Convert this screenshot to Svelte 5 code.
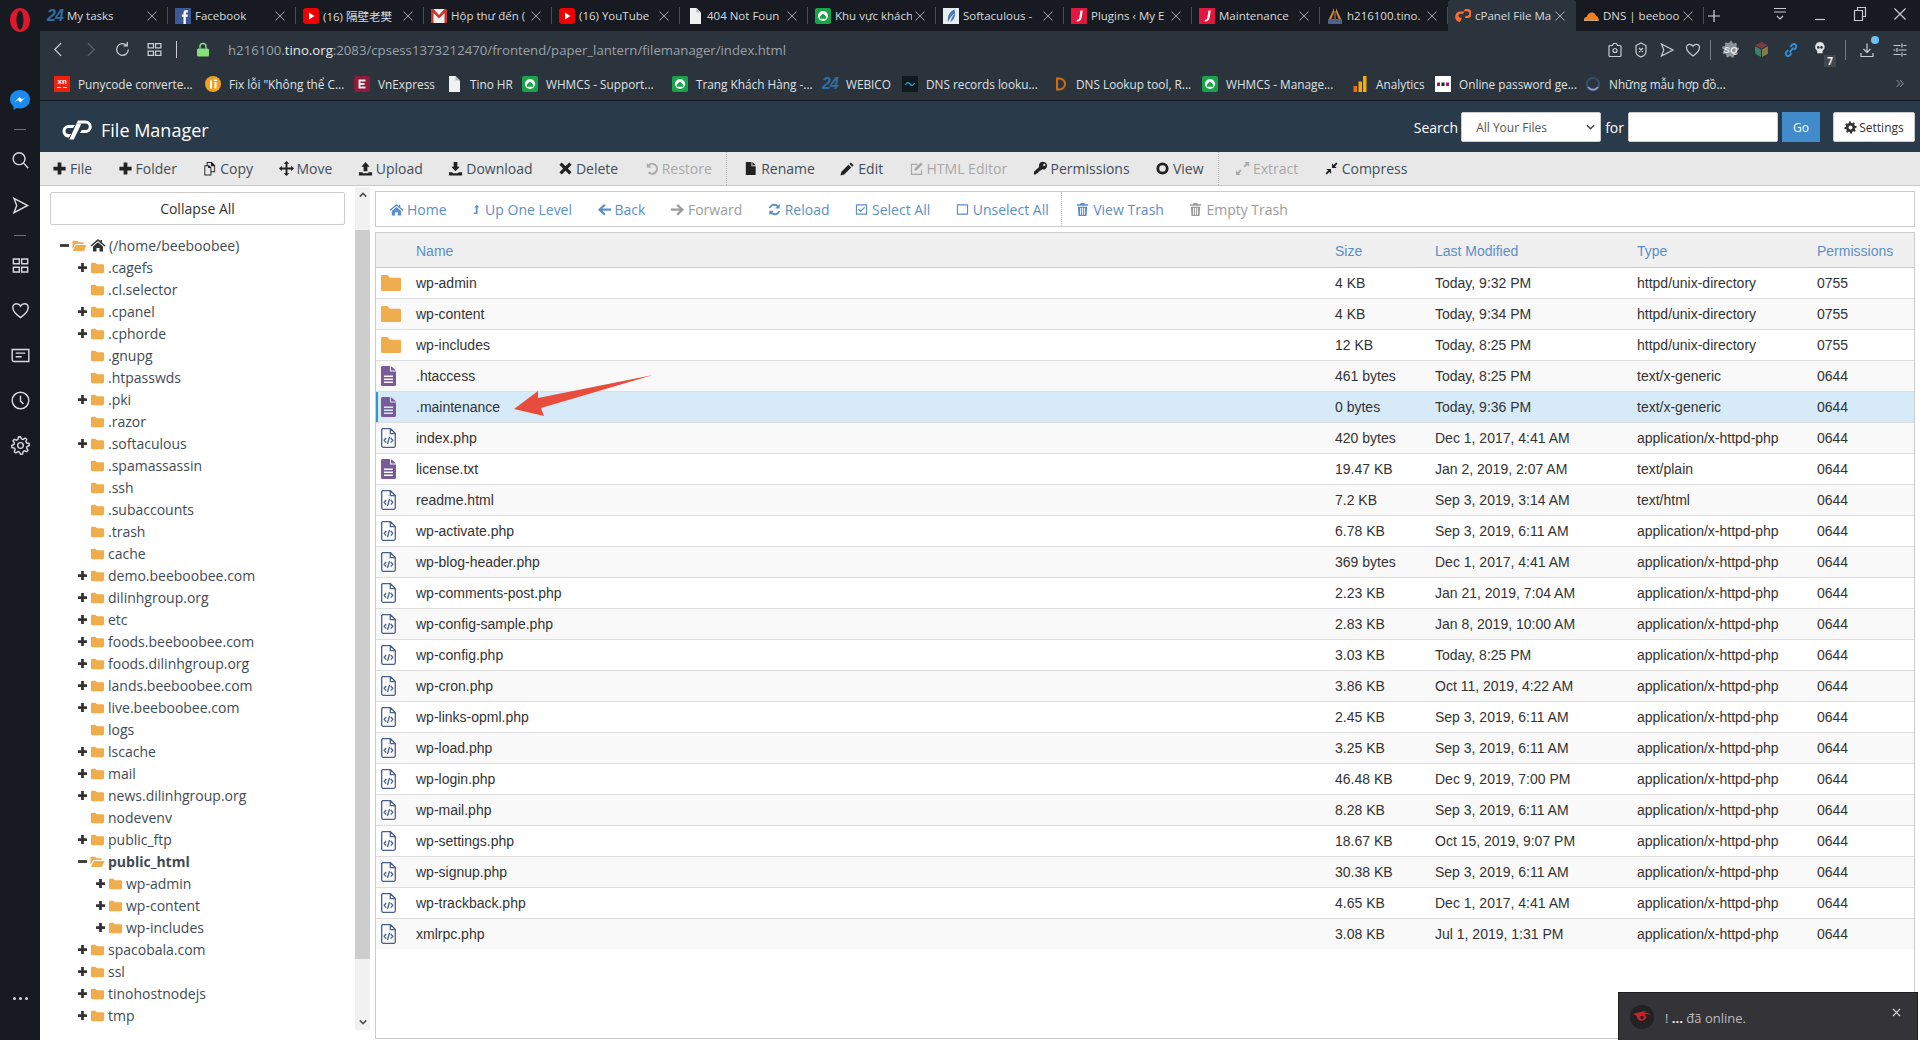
<script>
	function gear(teeth, outer, inner, hole) {
		let d = '';
		const step = (Math.PI * 2) / teeth;
		for (let i = 0; i < teeth; i++) {
			const a = i * step - step / 2;
			const pts = [
				[inner, a + step * 0.0],
				[outer, a + step * 0.2],
				[outer, a + step * 0.5],
				[inner, a + step * 0.7]
			];
			for (const [r, t] of pts) {
				d += (d ? 'L' : 'M') + (8 + r * Math.cos(t)).toFixed(2) + ' ' + (8 + r * Math.sin(t)).toFixed(2);
			}
		}
		d += `zM${8 - hole} 8a${hole} ${hole} 0 1 0 ${hole * 2} 0a${hole} ${hole} 0 1 0 -${hole * 2} 0z`;
		return d;
	}

	const icons = {
		plus: 'M6 1.500h4v4.500h4.500v4H10v4.500H6V10H1.500V6H6z',
		copy: 'M2.500 4.500H5V1h5.500L14 4.500V12H10v3.500H2.500zM6 2v2.500h1.500L10 7v4h3V5.500h-3.500V2zM3.500 5.500v9H9V7.500H6.500v-2z',
		move: 'M8 0l3 3H9v4h4V5l3 3-3 3V9H9v4h2l-3 3-3-3h2V9H3v2L0 8l3-3v2h4V3H5z',
		upload: 'M8 1l4.500 5H10v5H6V6H3.500zM1 12h4v1h6v-1h4v3.500H1z',
		download: 'M6 1h4v5h2.500L8 11 3.500 6H6zM1 12h3.500l1 1h5l1-1H15v3.500H1z',
		times: 'M4 1.500L8 5.500l4-4L14.500 4 10.500 8l4 4-2.500 2.500-4-4-4 4L1.500 12l4-4-4-4z',
		undo: 'M3 2v5h5L6 5a4.200 4.200 0 1 1-.3 6.200l-1.500 1.600A6.300 6.300 0 1 0 4.600 3.600z',
		file: 'M3 1h6v4.500h4.500V15H3zM10 1l3.500 3.500H10z',
		pencil: 'M11.500 1.500l3 3-1.500 1.500-3-3zM9 4l3 3-7.500 7.500-4 1 1-4z',
		edit: 'M2 3h7v1.300H3.300v9.400h9.400V9H14v6H2zM12.500 1.500l2 2-6.500 6.500H6V8z',
		key: 'M11 1a4 4 0 1 1-1.200 7.800L8.500 10H7v1.500H5.500V13H4l-1 1.500H1v-3l5.500-5.200A4 4 0 0 1 11 1zm1 2a1.200 1.200 0 1 0 0 2.400 1.200 1.200 0 0 0 0-2.400z',
		view: 'M8 1.500a6.500 6.500 0 1 0 0 13 6.500 6.500 0 0 0 0-13zm0 3a3.500 3.500 0 1 1 0 7 3.500 3.500 0 0 1 0-7z',
		expand: 'M1 15v-5l1.800 1.800L5.500 9 7 10.500l-2.700 2.700L6 15zM15 1v5l-1.800-1.800L10.500 7 9 5.500l2.700-2.700L10 1z',
		compress: 'M7.500 8.500v5l-1.800-1.800L3 14.400 1.600 13l2.700-2.700L2.500 8.500zM8.500 7.500v-5l1.800 1.800L13 1.600 14.400 3l-2.700 2.700 1.800 1.800z',
		home: 'M8 2l2.500 2.200V3H12v2.500L15.500 8.500 14.600 9.600 8 4 1.400 9.600.5 8.500zM3 9.500L8 5.300l5 4.200V14.500H9.500V11h-3v3.500H3z',
		up: 'M8.500 1l3.500 4H9.500v9.500h-6L5 12.500h2V5H4.500z',
		left: 'M7.500 2l1.700 1.700L5.800 7H15v2.400H5.800l3.400 3.300L7.500 14.500 1 8.200z',
		right: 'M8.500 2L6.800 3.700 10.200 7H1v2.400h9.200l-3.400 3.300 1.700 1.800L15 8.200z',
		reload: 'M13.500 2v4.800H8.700l1.800-1.800A4.200 4.200 0 0 0 3.800 6.500H1.900A6.200 6.200 0 0 1 12 3.500zM2.500 14V9.200h4.800l-1.800 1.800a4.200 4.200 0 0 0 6.700-1.500h1.900A6.200 6.200 0 0 1 4 12.500z',
		check: 'M2 2.500h12v11H2zM3.200 3.700v8.600h9.600V3.700zM7 11L4.300 8.300l1-1L7 9l3.800-3.800 1 1z',
		square: 'M2 2.500h12v11H2zM3.200 3.700v8.600h9.600V3.700z',
		trash: 'M6 1h4l.7 1.500H14V4H2V2.500h3.300zM3 5h10l-.7 10H3.700zM5.500 6.500v7h1v-7zM7.500 6.500v7h1v-7zM9.500 6.500v7h1v-7z',
		gear: gear(8, 7.6, 5.6, 2.4),
		folder: 'M1 4a1.200 1.200 0 0 1 1.200-1.200h3.600L7.300 4.500h6.500A1.200 1.200 0 0 1 15 5.700V12.800A1.200 1.200 0 0 1 13.800 14H2.200A1.200 1.200 0 0 1 1 12.800z',
		open: 'M.5 3h5l1.500 1.600h5.500V6.500H3.600L.5 11zM4 7.500h11.500L12.700 13.800H.8z',
		minus: 'M1.500 6h13v4h-13z'
	};

	const lines = {
		back: 'M10.500 2L4.500 8l6 6',
		forward: 'M5.500 2l6 6-6 6',
		refresh: 'M13.500 8a5.500 5.500 0 1 1-1.600-3.900M12.500 1v3.500H9',
		grid: 'M2 2.500h5v4H2zM9 2.500h5v4H9zM2 9.500h5v4H2zM9 9.500h5v4H9z',
		camera: 'M3 3.500h2.500L6.500 1.500h3l1 2H13a1 1 0 0 1 1 1v9a1 1 0 0 1-1 1H3a1 1 0 0 1-1-1v-9a1 1 0 0 1 1-1zM8 6.500a2 2 0 1 0 0 4 2 2 0 0 0 0-4z',
		shield: 'M8 1l5 2.500v6.500c0 2.500-2.500 4-5 5-2.500-1-5-2.500-5-5V3.500zM6 6l4 4M10 6l-4 4',
		send: 'M2.500 2L14 8 2.500 14l2.300-6z',
		heart: 'M8 14C3 10.500 1.500 8 1.500 5.500 1.500 3.500 3 2.300 4.700 2.300 6 2.300 7.300 3 8 4.300 8.700 3 10 2.300 11.300 2.300c1.700 0 3.200 1.200 3.200 3.200C14.500 8 13 10.500 8 14z',
		dl: 'M8 1.500v8.500M4.500 7L8 10.500 11.500 7M2 11v3.500h12V11',
		tune: 'M1.500 3.500h7M11.500 3.500h3M10 1.500v4M1.500 8h2M6.500 8h8M5 6v4M1.500 12.500h7M11.500 12.500h3M10 10.500v4',
		search: 'M6.800 1.500a5 5 0 1 0 0 10 5 5 0 0 0 0-10zM10.500 10l4 4.500',
		news: 'M1 3h14v10H2.500A1.500 1.500 0 0 1 1 11.500zM4 6h8M4 9h5',
		clock: 'M8 1a7 7 0 1 0 0 14A7 7 0 0 0 8 1zM8 4v4.500l2.500 2.500',
		gearline: gear(8, 7.4, 5.6, 2.4),
		menu: 'M2 2.500h12M2 6h12M5 10l3 3 3-3',
		restore: 'M5.500 4V1.500h8v9h-3M2.500 4.500h8v10h-8z',
		x: 'M2.500 2.500l11 11M13.500 2.500l-11 11',
		min: 'M3 13.500h10',
		add: 'M8 2v12M2 8h12',
		chev: 'M4 3l4.500 5L4 13M9 3l4.500 5L9 13',
		link: 'M6.500 10.500l4-5M5 8l-2 2.500a2.400 2.400 0 0 0 3.600 3l2-2.500M11 8l2-2.500a2.400 2.400 0 0 0-3.600-3L7.400 5'
	};

	const tabs = [
		{ t: 'My tasks', k: '24' },
		{ t: 'Facebook', k: 'fb' },
		{ t: '(16) 隔壁老樊', k: 'yt' },
		{ t: 'Hộp thư đến (', k: 'gm' },
		{ t: '(16) YouTube', k: 'yt' },
		{ t: '404 Not Foun', k: 'doc' },
		{ t: 'Khu vực khách', k: 'wh' },
		{ t: 'Softaculous -', k: 'so' },
		{ t: 'Plugins ‹ My E', k: 'j' },
		{ t: 'Maintenance', k: 'j' },
		{ t: 'h216100.tino.', k: 'tr' },
		{ t: 'cPanel File Ma', k: 'cp', active: true },
		{ t: 'DNS | beeboo', k: 'cf' }
	];

	const bookmarks = [
		{ t: 'Punycode converte...', k: 'xn', w: 151 },
		{ t: 'Fix lỗi "Không thể C...', k: 'fx', w: 149 },
		{ t: 'VnExpress', k: 've', w: 92 },
		{ t: 'Tino HR', k: 'doc', w: 76 },
		{ t: 'WHMCS - Support...', k: 'wh', w: 150 },
		{ t: 'Trang Khách Hàng -...', k: 'wh', w: 150 },
		{ t: 'WEBICO', k: '24', w: 80 },
		{ t: 'DNS records looku...', k: 'dn', w: 150 },
		{ t: 'DNS Lookup tool, R...', k: 'dd', w: 150 },
		{ t: 'WHMCS - Manage...', k: 'wh', w: 150 },
		{ t: 'Analytics', k: 'an', w: 83 },
		{ t: 'Online password ge...', k: 'pw', w: 150 },
		{ t: 'Những mẫu hợp đồ...', k: 'mh', w: 290 }
	];

	const tools = [
		{ t: 'File', i: 'plus' },
		{ t: 'Folder', i: 'plus' },
		{ t: 'Copy', i: 'copy' },
		{ t: 'Move', i: 'move' },
		{ t: 'Upload', i: 'upload' },
		{ t: 'Download', i: 'download' },
		{ t: 'Delete', i: 'times' },
		{ t: 'Restore', i: 'undo', off: true, sep: true },
		{ t: 'Rename', i: 'file' },
		{ t: 'Edit', i: 'pencil' },
		{ t: 'HTML Editor', i: 'edit', off: true },
		{ t: 'Permissions', i: 'key' },
		{ t: 'View', i: 'view', sep: true },
		{ t: 'Extract', i: 'expand', off: true },
		{ t: 'Compress', i: 'compress' }
	];

	const navs = [
		{ t: 'Home', i: 'home' },
		{ t: 'Up One Level', i: 'up', thin: true },
		{ t: 'Back', i: 'left' },
		{ t: 'Forward', i: 'right', off: true },
		{ t: 'Reload', i: 'reload' },
		{ t: 'Select All', i: 'check' },
		{ t: 'Unselect All', i: 'square', sep: true },
		{ t: 'View Trash', i: 'trash' },
		{ t: 'Empty Trash', i: 'trash', off: true }
	];

	const tree = [
		{ n: '.cagefs', x: 1 }, { n: '.cl.selector' }, { n: '.cpanel', x: 1 }, { n: '.cphorde', x: 1 },
		{ n: '.gnupg' }, { n: '.htpasswds' }, { n: '.pki', x: 1 }, { n: '.razor' },
		{ n: '.softaculous', x: 1 }, { n: '.spamassassin' }, { n: '.ssh' }, { n: '.subaccounts' },
		{ n: '.trash' }, { n: 'cache' }, { n: 'demo.beeboobee.com', x: 1 }, { n: 'dilinhgroup.org', x: 1 },
		{ n: 'etc', x: 1 }, { n: 'foods.beeboobee.com', x: 1 }, { n: 'foods.dilinhgroup.org', x: 1 },
		{ n: 'lands.beeboobee.com', x: 1 }, { n: 'live.beeboobee.com', x: 1 }, { n: 'logs' },
		{ n: 'lscache', x: 1 }, { n: 'mail', x: 1 }, { n: 'news.dilinhgroup.org', x: 1 }, { n: 'nodevenv' },
		{ n: 'public_ftp', x: 1 }, { n: 'public_html', open: true },
		{ n: 'wp-admin', x: 1, sub: true }, { n: 'wp-content', x: 1, sub: true }, { n: 'wp-includes', x: 1, sub: true },
		{ n: 'spacobala.com', x: 1 }, { n: 'ssl', x: 1 }, { n: 'tinohostnodejs', x: 1 }, { n: 'tmp', x: 1 }
	];

	const php = 'application/x-httpd-php';
	const files = [
		['wp-admin', '4 KB', 'Today, 9:32 PM', 'httpd/unix-directory', '0755', 'dir'],
		['wp-content', '4 KB', 'Today, 9:34 PM', 'httpd/unix-directory', '0755', 'dir'],
		['wp-includes', '12 KB', 'Today, 8:25 PM', 'httpd/unix-directory', '0755', 'dir'],
		['.htaccess', '461 bytes', 'Today, 8:25 PM', 'text/x-generic', '0644', 'txt'],
		['.maintenance', '0 bytes', 'Today, 9:36 PM', 'text/x-generic', '0644', 'txt'],
		['index.php', '420 bytes', 'Dec 1, 2017, 4:41 AM', php, '0644', 'code'],
		['license.txt', '19.47 KB', 'Jan 2, 2019, 2:07 AM', 'text/plain', '0644', 'txt'],
		['readme.html', '7.2 KB', 'Sep 3, 2019, 3:14 AM', 'text/html', '0644', 'code'],
		['wp-activate.php', '6.78 KB', 'Sep 3, 2019, 6:11 AM', php, '0644', 'code'],
		['wp-blog-header.php', '369 bytes', 'Dec 1, 2017, 4:41 AM', php, '0644', 'code'],
		['wp-comments-post.php', '2.23 KB', 'Jan 21, 2019, 7:04 AM', php, '0644', 'code'],
		['wp-config-sample.php', '2.83 KB', 'Jan 8, 2019, 10:00 AM', php, '0644', 'code'],
		['wp-config.php', '3.03 KB', 'Today, 8:25 PM', php, '0644', 'code'],
		['wp-cron.php', '3.86 KB', 'Oct 11, 2019, 4:22 AM', php, '0644', 'code'],
		['wp-links-opml.php', '2.45 KB', 'Sep 3, 2019, 6:11 AM', php, '0644', 'code'],
		['wp-load.php', '3.25 KB', 'Sep 3, 2019, 6:11 AM', php, '0644', 'code'],
		['wp-login.php', '46.48 KB', 'Dec 9, 2019, 7:00 PM', php, '0644', 'code'],
		['wp-mail.php', '8.28 KB', 'Sep 3, 2019, 6:11 AM', php, '0644', 'code'],
		['wp-settings.php', '18.67 KB', 'Oct 15, 2019, 9:07 PM', php, '0644', 'code'],
		['wp-signup.php', '30.38 KB', 'Sep 3, 2019, 6:11 AM', php, '0644', 'code'],
		['wp-trackback.php', '4.65 KB', 'Dec 1, 2017, 4:41 AM', php, '0644', 'code'],
		['xmlrpc.php', '3.08 KB', 'Jul 1, 2019, 1:31 PM', php, '0644', 'code']
	];
</script>

{#snippet fa(name)}
	<svg class="fa" viewBox="0 0 16 16"><path d={icons[name]} fill-rule="evenodd" /></svg>
{/snippet}

{#snippet ln(name)}
	<svg class="ln" viewBox="0 0 16 16"><path d={lines[name]} /></svg>
{/snippet}

{#snippet fav(k)}
	{#if k === '24'}
		<span class="fav f24">24</span>
	{:else}
		<svg class="fav" viewBox="0 0 16 16">
			{#if k === 'fb'}
				<rect width="16" height="16" fill="#3b5998" />
				<path d="M8.500 16V9H6.800V6.500h1.700V5c0-2 1-3 2.900-3h1.400v2.500h-1c-.8 0-1 .3-1 1v1h2l-.3 2.500h-1.700v7z" fill="#fff" />
			{:else if k === 'yt'}
				<rect width="16" height="16" rx="3" fill="#e00" />
				<path d="M6 4.500l5.500 3.500L6 11.500z" fill="#fff" />
			{:else if k === 'gm'}
				<rect y="1" width="16" height="14" fill="#eee" />
				<path d="M0 1h2.500L8 7l5.500-6H16v14h-2.500V5L8 10.500 2.500 5v10H0z" fill="#c5372c" />
			{:else if k === 'doc'}
				<path d="M3 0h6.500L14 4.500V16H3z" fill="#eef0f2" />
				<path d="M9.500 0v4.500H14z" fill="#b4bac0" />
			{:else if k === 'wh'}
				<rect width="16" height="16" rx="2" fill="#1aa34a" />
				<circle cx="8" cy="8" r="5" fill="#fff" />
				<path d="M4.800 8.500L8 5.500l3.200 3v2.300H4.800z" fill="#1aa34a" />
			{:else if k === 'so'}
				<rect width="16" height="16" fill="#e8edf2" />
				<path d="M11.500 1.500C7 3 4 8 5 14c2-4 4-7 7-9-2.500 3-4 6-4.500 9 4-2 5.500-7 4-12.500z" fill="#4a7ab5" />
			{:else if k === 'j'}
				<rect width="16" height="16" fill="#e3173e" />
				<path d="M9.500 2.500h2.300L10.500 10c-.4 2.300-1.800 3.500-4.800 3.500l.3-1.800c1.500 0 2-.5 2.300-2z" fill="#fff" />
			{:else if k === 'tr'}
				<path d="M7 0L1.500 12h2.500L7 4zM9 0l5.500 12H12L9 4z" fill="#d08b3a" />
				<rect x="1" y="11" width="14" height="5" fill="#55608a" />
				<path d="M7.500 3h1v8h-1z" fill="#d08b3a" />
			{:else if k === 'cp'}
				<path d="M5.500 3.500h4l-1.500 2.300H5.500a2 2 0 0 0 0 4h1.500L5 14h-.5a5.300 5.300 0 0 1 1-10.500z" fill="#ff6c2c" />
				<path d="M10 1h2.500a4.500 4.500 0 0 1 0 9h-2.800l1.300-2.200h1.500a2.300 2.300 0 0 0 0-4.500H9l-5.500 9.700" fill="#ff6c2c" />
			{:else if k === 'cf'}
				<path d="M1 12.500c-.5-2 .8-3.500 2.500-3.500C4.500 6 7 4 9.500 4.500c2 .4 3.300 2 3.500 3.500 1.500 0 2.800 1.500 2.800 4.500z" fill="#f48120" />
				<path d="M1 12.500h14.800v.5H1z" fill="#fff" />
			{:else if k === 'xn'}
				<rect width="16" height="16" fill="#f0200f" />
				<path d="M3 11.500h4M9 11.500h4" stroke="#fff" fill="none" />
				<text x="8" y="8" text-anchor="middle" font-size="8" font-family="Liberation Mono" font-weight="700" fill="#fff">xn</text>
			{:else if k === 'fx'}
				<circle cx="8" cy="8" r="8" fill="#f0a11f" />
				<path d="M5 4.500h2v8H5zM9.500 6h2v6.500h-2zM9 3.500h3V5H9z" fill="#fff" />
			{:else if k === 've'}
				<rect width="16" height="16" rx="2" fill="#8e1c3c" />
				<path d="M4.500 3.500h7v2H6.500v1.500h4v2h-4v1.500h5v2h-7z" fill="#f2e6e6" />
			{:else if k === 'dn'}
				<rect width="16" height="16" fill="#0e1a20" />
				<path d="M3.500 9c1.500-3 3-3 4.500-1s3 2 4.500-1" stroke="#28a8c8" stroke-width="1.300" fill="none" />
			{:else if k === 'dd'}
				<path d="M4 1.500h3.500a6.500 6.500 0 0 1 0 13H4z M6 3.500v9h1.500a4.500 4.500 0 0 0 0-9z" fill="#d26b12" fill-rule="evenodd" />
			{:else if k === 'an'}
				<rect x="1.500" y="10" width="3.500" height="6" fill="#e8710a" />
				<rect x="6.500" y="5.500" width="3.500" height="10.500" fill="#f9ab00" />
				<rect x="11" y="0" width="3.500" height="16" fill="#f9ab00" />
			{:else if k === 'pw'}
				<rect width="16" height="16" fill="#fff" />
				<rect x="2" y="6.500" width="3" height="3.500" fill="#a01580" />
				<rect x="6.500" y="6.500" width="3" height="3.500" fill="#222" />
				<rect x="11" y="6.500" width="3" height="3.500" fill="#a01580" />
			{:else if k === 'mh'}
				<circle cx="8" cy="8" r="6" fill="none" stroke="#34506e" stroke-width="2" />
				<path d="M3 11a6 6 0 0 0 10 0" fill="none" stroke="#8a96c8" stroke-width="2" />
			{/if}
		</svg>
	{/if}
{/snippet}

<div class="app">
	<aside class="rail">
		<svg class="opera" viewBox="0 0 20 24"><path d="M10 0c5.500 0 10 5.400 10 12s-4.500 12-10 12S0 18.600 0 12 4.500 0 10 0zm0 2.500C8 2.500 6.500 6.700 6.500 12s1.500 9.500 3.500 9.500 3.500-4.200 3.500-9.500S12 2.500 10 2.500z" fill="#e1172b" fill-rule="evenodd" /></svg>
		<svg class="msgr" viewBox="0 0 20 20">
			<path d="M10 0C4.500 0 0 4.100 0 9.300c0 2.900 1.300 5.300 3.500 7V20l3.300-1.900c1 .3 2.100.5 3.200.5 5.500 0 10-4.100 10-9.300S15.500 0 10 0z" fill="#1a8cf0" />
			<path d="M4.500 12.500L9.500 7l2.500 2.600L15.500 7l-5 5.500-2.500-2.600z" fill="#fff" />
		</svg>
		<div class="dash"></div>
		<div class="rail-ic">{@render ln('search')}</div>
		<div class="rail-ic">{@render ln('send')}</div>
		<div class="dash d3"></div>
		<div class="rail-ic">{@render ln('grid')}</div>
		<div class="rail-ic">{@render ln('heart')}</div>
		<div class="rail-ic">{@render ln('news')}</div>
		<div class="rail-ic">{@render ln('clock')}</div>
		<div class="rail-ic">{@render ln('gearline')}</div>
		<div class="dots"><i></i><i></i><i></i></div>
	</aside>

	<div class="browser">
		<div class="tabs">
			{#each tabs as tab}
				<div class="tab" class:active={tab.active}>
					{@render fav(tab.k)}
					<span class="tab-title">{tab.t}</span>
					<svg class="tab-x" viewBox="0 0 10 10"><path d="M.5.5l9 9M9.500.5l-9 9" /></svg>
				</div>
			{/each}
			<div class="tab-add">{@render ln('add')}</div>
			<div class="win">
				<span>{@render ln('menu')}</span>
				<span>{@render ln('min')}</span>
				<span>{@render ln('restore')}</span>
				<span>{@render ln('x')}</span>
			</div>
		</div>

		<div class="addr">
			<span class="nav-ic">{@render ln('back')}</span>
			<span class="nav-ic dim">{@render ln('forward')}</span>
			<span class="nav-ic">{@render ln('refresh')}</span>
			<span class="nav-ic">{@render ln('grid')}</span>
			<span class="bar"></span>
			<svg class="lock" viewBox="0 0 12 14"><path d="M3 6V4a3 3 0 0 1 6 0v2" fill="none" stroke="#86e07c" stroke-width="1.400" /><rect y="6" width="12" height="8" rx="1.500" fill="#86e07c" /></svg>
			<div class="url">h216100.<b>tino.org</b>:2083/cpsess1373212470/frontend/paper_lantern/filemanager/index.html</div>
			<div class="addr-right">
				<span class="ar">{@render ln('camera')}</span>
				<span class="ar">{@render ln('shield')}</span>
				<span class="ar">{@render ln('send')}</span>
				<span class="ar">{@render ln('heart')}</span>
				<span class="bar small"></span>
				<svg class="ext e1" viewBox="0 0 16 16">
					<path d={gear(9, 8, 6.4, 0)} fill="#8d9399" />
					<text x="8" y="11" text-anchor="middle" font-size="9" font-weight="700" font-style="italic" font-family="Liberation Sans" fill="#e8e8e8">SQ</text>
				</svg>
				<svg class="ext e2" viewBox="0 0 16 16"><path d="M8 1l6 3-6 3-6-3z" fill="#7c3b3f" /><path d="M2 5l5.500 3v7L2 12z" fill="#3f7f70" /><path d="M14 5L8.500 8v7l5.500-3z" fill="#8a7a48" /></svg>
				<span class="ar blue">{@render ln('link')}</span>
				<span class="skull">
					<svg class="ext" viewBox="0 0 16 16"><path d="M6.500 1a4.500 4.500 0 0 0-2.500 8.200v2.300h5V9.200A4.500 4.500 0 0 0 6.500 1z" fill="#e2e4e6" /><circle cx="5" cy="6" r="1.200" fill="#2b343d" /><circle cx="8" cy="6" r="1.200" fill="#2b343d" /></svg>
					<b>7</b>
				</span>
				<span class="bar small"></span>
				<span class="ar dl">{@render ln('dl')}<i></i></span>
				<span class="ar tune">{@render ln('tune')}</span>
			</div>
		</div>

		<div class="marks">
			{#each bookmarks as b}
				<div class="mark" style="width: {b.w}px">
					{@render fav(b.k)}
					<span>{b.t}</span>
				</div>
			{/each}
			<span class="more">{@render ln('chev')}</span>
		</div>

		<header class="cp-head">
			<svg class="cp-logo" viewBox="0 0 31 20">
				<path d="M7 5h7l-2 3H7.500a3 3 0 0 0 0 6H10l-2 3.500H7A6.300 6.300 0 0 1 7 5z" fill="#fff" />
				<path d="M17 .5h7.500a6.200 6.200 0 0 1 0 12.500H19l1.800-3h3.700a3.100 3.100 0 0 0 0-6.500H15.500z" fill="#fff" />
				<path d="M15.500 3.500h5L12.800 19.500H8.300z" fill="#fff" />
			</svg>
			<h1>File Manager</h1>
			<div class="search">
				<label for="q">Search</label>
				<div class="select">All Your Files<svg viewBox="0 0 10 6"><path d="M1 1l4 4 4-4" /></svg></div>
				<span class="for">for</span>
				<input id="q" />
				<button class="go">Go</button>
				<button class="settings">{@render fa('gear')}Settings</button>
			</div>
		</header>

		<div class="toolbar">
			{#each tools as t}
				<div class="tool" class:off={t.off}>{@render fa(t.i)}{t.t}</div>
				{#if t.sep}<div class="tool-sep"></div>{/if}
			{/each}
		</div>

		<div class="body">
			<section class="side">
				<div class="tree-col">
					<button class="collapse">Collapse All</button>
					<ul class="tree">
						<li class="root">
							<span class="tg">{@render fa('minus')}</span>
							<span class="fo open">{@render fa('open')}</span>
							<span class="hm">{@render fa('home')}</span>
							(/home/beeboobee)
						</li>
						{#each tree as n}
							<li class:sub={n.sub} class:cur={n.open}>
								<span class="tg">
									{#if n.x}{@render fa('plus')}{:else if n.open}{@render fa('minus')}{/if}
								</span>
								<span class="fo">{@render fa(n.open ? 'open' : 'folder')}</span>
								{n.n}
							</li>
						{/each}
					</ul>
				</div>
				<div class="scroll">
					<svg class="sa" viewBox="0 0 10 6"><path d="M1 5l4-4 4 4" /></svg>
					<div class="thumb"></div>
					<svg class="sa" viewBox="0 0 10 6"><path d="M1 1l4 4 4-4" /></svg>
				</div>
			</section>

			<section class="main">
				<nav class="crumbs">
					{#each navs as n}
						<div class="crumb" class:off={n.off} class:thin={n.thin}>{@render fa(n.i)}{n.t}</div>
						{#if n.sep}<div class="crumb-sep"></div>{/if}
					{/each}
				</nav>
				<div class="listing">
					<table>
						<colgroup>
							<col style="width: 40px" />
							<col style="width: 919px" />
							<col style="width: 100px" />
							<col style="width: 202px" />
							<col style="width: 180px" />
							<col />
						</colgroup>
						<thead>
							<tr><th></th><th>Name</th><th>Size</th><th>Last Modified</th><th>Type</th><th>Permissions</th></tr>
						</thead>
						<tbody>
							{#each files as f}
								<tr class:sel={f[0] === '.maintenance'}>
									<td class="ico">
										{#if f[5] === 'dir'}
											<svg class="i-dir" viewBox="0 0 20 16"><path d="M0 1.200A1.200 1.200 0 0 1 1.200 0h5.300l2.300 2.800h10A1.200 1.200 0 0 1 20 4v10.800a1.200 1.200 0 0 1-1.200 1.200H1.200A1.200 1.200 0 0 1 0 14.800z" /></svg>
										{:else if f[5] === 'txt'}
											<svg class="i-txt" viewBox="0 0 15 20"><path fill-rule="evenodd" d="M0 1.500A1.500 1.500 0 0 1 1.500 0H9v5.500h6v13a1.500 1.500 0 0 1-1.500 1.500h-12A1.500 1.500 0 0 1 0 18.500zM10 0l5 4.500h-5zM3 9.500h9V11H3zM3 12.500h9V14H3zM3 15.500h9V17H3z" /></svg>
										{:else}
											<svg class="i-code" viewBox="0 0 15 20"><path d="M1.500.7h8l4.800 4.800v12.300a1.500 1.500 0 0 1-1.500 1.500H2.200A1.500 1.500 0 0 1 .7 17.800V1.500zM9.300.7v5h5M5.200 10l-2 2.300 2 2.300M9.800 10l2 2.300-2 2.300M8.500 9l-2 7" /></svg>
										{/if}
									</td>
									<td>{f[0]}</td>
									<td>{f[1]}</td>
									<td>{f[2]}</td>
									<td>{f[3]}</td>
									<td>{f[4]}</td>
								</tr>
							{/each}
						</tbody>
					</table>
				</div>
			</section>
		</div>
	</div>

	<!-- red annotation arrow drawn over the table -->
	<svg class="arrow" viewBox="0 0 150 50"><path d="M4 44L28 26 28 33 143 10 31 43 34 51z" /></svg>

	<div class="toast">
		<svg class="toast-ic" viewBox="0 0 24 24"><circle cx="12" cy="12" r="12" fill="#222" /><path d="M3 9c4-1 9-3 14-3-2 .5-3 1-4 1.500 3 0 6 .5 8 2-3-.5-5-.5-7 0 2 .5 3 2 2 4-1.500 2.500-6 3-8 1-1-1-1.500-2-1-3.500z" fill="#cc2027" /><circle cx="12" cy="12.500" r="1.800" fill="#222" /></svg>
		<div class="toast-text">! <b>...</b> đã online.</div>
		<svg class="toast-x" viewBox="0 0 10 10"><path d="M1 1l8 8M9 1l-8 8" /></svg>
	</div>
</div>

<style>
	:global(body) {
		margin: 0;
		overflow: hidden;
	}
	.app {
		position: relative;
		display: flex;
		width: 1920px;
		height: 1040px;
		overflow: hidden;
		background: #fff;
		font-family: 'Open Sans', sans-serif;
	}
	.fa {
		width: 14px;
		height: 14px;
		fill: currentColor;
		flex: none;
	}
	.ln {
		width: 16px;
		height: 16px;
		fill: none;
		stroke: currentColor;
		stroke-width: 1.2;
		flex: none;
	}

	/* left opera rail */
	.rail {
		width: 40px;
		flex: none;
		background: #171b21;
		color: #d6d9dc;
		display: flex;
		flex-direction: column;
		align-items: center;
		padding-top: 8px;
		box-sizing: border-box;
	}
	.opera {
		width: 20px;
		height: 24px;
	}
	.msgr {
		width: 20px;
		height: 20px;
		margin-top: 58px;
	}
	.dash {
		width: 12px;
		height: 1px;
		background: #6b7077;
		margin: 19px 0 8px;
		flex: none;
	}
	.d3 {
		margin: 7px 0;
	}
	.rail-ic {
		height: 45px;
		display: flex;
		align-items: center;
		justify-content: center;
		flex: none;
	}
	.rail-ic .ln {
		width: 19px;
		height: 19px;
	}
	.dots {
		margin-top: auto;
		margin-bottom: 40px;
		display: flex;
		gap: 3px;
	}
	.dots i {
		width: 3px;
		height: 3px;
		border-radius: 50%;
		background: #d6d9dc;
	}

	.browser {
		flex: 1;
		min-width: 0;
		display: flex;
		flex-direction: column;
	}

	/* tab strip */
	.tabs {
		height: 31px;
		flex: none;
		display: flex;
		background: #171b21;
	}
	.tab {
		width: 128px;
		flex: none;
		box-sizing: border-box;
		display: flex;
		align-items: center;
		padding: 0 11px 0 7px;
		position: relative;
		color: #d8dadd;
		font-size: 11.5px;
	}
	.tab::after {
		content: '';
		position: absolute;
		right: 0;
		top: 7px;
		height: 17px;
		width: 1px;
		background: #4a4f56;
	}
	.tab.active {
		background: #2b343d;
		border-radius: 3px 3px 0 0;
	}
	.tab.active::after {
		display: none;
	}
	.fav {
		width: 16px;
		height: 16px;
		flex: none;
	}
	.f24 {
		font: italic 700 16px/16px 'Liberation Sans', sans-serif;
		color: #2f6da3;
		letter-spacing: -1px;
		display: block;
	}
	.tab-title {
		flex: 1;
		min-width: 0;
		margin-left: 4px;
		white-space: nowrap;
		overflow: hidden;
		font-family: 'Open Sans', 'Noto Sans CJK SC', sans-serif;
	}
	.tab-x {
		width: 10px;
		height: 10px;
		flex: none;
		margin-left: 3px;
		fill: none;
		stroke: #a7abb0;
		stroke-width: 1;
	}
	.tab-add {
		margin-left: 2px;
		width: 16px;
		display: flex;
		align-items: center;
		color: #d6d9dc;
	}
	.win {
		margin-left: auto;
		display: flex;
		align-items: center;
		color: #c6c9cc;
		padding-right: 12px;
		gap: 24px;
	}

	/* address bar */
	.addr {
		height: 36px;
		flex: none;
		box-sizing: border-box;
		padding: 1px 0 0 2px;
		background: #2b343d;
		display: flex;
		align-items: center;
		color: #c9ccd0;
	}
	.nav-ic {
		width: 32px;
		display: flex;
		justify-content: center;
	}
	.nav-ic .ln {
		width: 17px;
		height: 17px;
	}
	.nav-ic.dim {
		color: #59616a;
	}
	.bar {
		width: 1px;
		height: 17px;
		background: #c9ccd0;
		margin-left: 6px;
	}
	.bar.small {
		height: 20px;
		background: #767c83;
		margin: 0;
	}
	.lock {
		width: 12px;
		height: 15px;
		margin-left: 20px;
	}
	.url {
		margin-left: 19px;
		font-size: 13.2px;
		color: #9aa1a8;
		white-space: nowrap;
	}
	.url b {
		font-weight: 400;
		color: #e4e6e8;
	}
	.addr-right {
		margin-left: auto;
		display: flex;
		align-items: center;
		gap: 8px;
		padding-right: 11px;
	}
	.ar {
		width: 18px;
		display: flex;
		justify-content: center;
		position: relative;
	}
	.ar.blue {
		color: #2f8fe0;
		margin-left: 4.5px;
	}
	.ar.blue .ln {
		stroke-width: 2;
	}
	.ext {
		width: 17px;
		height: 17px;
	}
	.e1 {
		margin-left: 2.5px;
	}
	.e2 {
		margin-left: 6px;
	}
	.skull {
		position: relative;
		width: 20px;
		margin: 0 4px 0 5px;
		display: flex;
	}
	.skull b {
		position: absolute;
		right: -3px;
		bottom: -9px;
		background: #42474e;
		color: #f0f0f0;
		font-size: 10px;
		line-height: 12px;
		padding: 0 3px;
	}
	.dl {
		margin-left: 4px;
	}
	.dl i {
		position: absolute;
		top: -6px;
		right: -3px;
		width: 8px;
		height: 8px;
		border-radius: 50%;
		background: #6fc1f5;
	}
	.tune {
		margin-left: 7px;
	}

	/* bookmarks */
	.marks {
		height: 34px;
		flex: none;
		box-sizing: border-box;
		background: #2b343d;
		border-bottom: 1px solid #12151a;
		display: flex;
		align-items: center;
		padding-left: 14px;
		color: #dfe1e4;
		font-size: 11.8px;
		position: relative;
	}
	.mark {
		display: flex;
		align-items: center;
		gap: 8px;
		flex: none;
		white-space: nowrap;
		box-sizing: border-box;
	}
	.more {
		position: absolute;
		right: 15px;
		top: 10px;
		display: flex;
		color: #aeb2b6;
	}
	.more .ln {
		width: 11px;
		height: 13px;
	}

	/* cpanel header */
	.cp-head {
		height: 51px;
		flex: none;
		background: #293a4a;
		display: flex;
		align-items: center;
		color: #fff;
		padding: 0 5px 0 21px;
	}
	.cp-logo {
		width: 31px;
		height: 20px;
		margin-top: 6px;
	}
	.cp-head h1 {
		margin: 6px 0 0 9px;
		font-size: 18px;
		font-weight: 400;
	}
	.search {
		margin-left: auto;
		display: flex;
		align-items: center;
		height: 30px;
		margin-top: 1px;
		font-size: 14px;
	}
	.search label {
		margin-right: 3px;
	}
	.select {
		width: 140px;
		height: 30px;
		box-sizing: border-box;
		background: #fff;
		border: 1px solid #ccc;
		border-radius: 2px;
		color: #555;
		font-size: 12px;
		display: flex;
		align-items: center;
		padding: 0 5px 0 14px;
		justify-content: space-between;
	}
	.select svg {
		width: 9px;
		height: 6px;
		fill: none;
		stroke: #444;
		stroke-width: 1.5;
	}
	.for {
		margin: 0 4px;
	}
	.search input {
		width: 150px;
		height: 30px;
		box-sizing: border-box;
		border: 1px solid #ccc;
		border-radius: 2px;
		padding: 0;
	}
	.go {
		width: 38px;
		height: 30px;
		margin-left: 4px;
		border: none;
		background: #428bca;
		color: #fff;
		font: 12px 'Open Sans', sans-serif;
		padding: 0;
	}
	.settings {
		width: 82px;
		height: 30px;
		margin-left: 13px;
		border: 1px solid #ccc;
		border-radius: 2px;
		background: #fff;
		color: #333;
		font: 12px 'Open Sans', sans-serif;
		display: flex;
		align-items: center;
		justify-content: center;
		gap: 2px;
		padding: 0;
	}
	.settings .fa {
		width: 13px;
		height: 13px;
	}

	/* action toolbar */
	.toolbar {
		height: 34px;
		flex: none;
		box-sizing: border-box;
		background: #e8e8e8;
		border-bottom: 1px solid #c8c8c8;
		display: flex;
		align-items: stretch;
		padding-left: 12px;
		font-size: 14px;
		color: #434e59;
	}
	.tool {
		display: flex;
		align-items: center;
		gap: 3px;
		margin-right: 25.4px;
		white-space: nowrap;
	}
	.tool .fa {
		width: 15px;
		height: 15px;
		color: #222;
	}
	.tool.off,
	.tool.off .fa {
		color: #a8a8a8;
	}
	.tool-sep {
		width: 0;
		border-left: 1px dotted #b5b5b5;
		margin: 0 16px 0 -11px;
	}

	/* panes */
	.body {
		flex: 1;
		min-height: 0;
		display: flex;
	}
	.side {
		width: 330px;
		flex: none;
		display: flex;
		align-items: flex-start;
	}
	.tree-col {
		width: 315px;
		flex: none;
		box-sizing: border-box;
		padding: 6px 10px 0 10px;
	}
	.collapse {
		width: 295px;
		height: 33px;
		box-sizing: border-box;
		background: #fff;
		border: 1px solid #ccc;
		border-radius: 2px;
		color: #333;
		font: 14px 'Open Sans', sans-serif;
		padding: 0;
		display: block;
	}
	.tree {
		list-style: none;
		margin: 9px 0 0;
		padding: 0;
		color: #3f4a55;
		font-size: 14px;
	}
	.tree li {
		height: 22px;
		display: flex;
		align-items: center;
		padding-left: 27px;
		white-space: nowrap;
	}
	.tree li.root {
		padding-left: 9px;
	}
	.tree li.sub {
		padding-left: 45px;
	}
	.tree li.cur {
		font-weight: 700;
	}
	.tg {
		width: 13px;
		display: flex;
		color: #333;
		flex: none;
	}
	.tg .fa {
		width: 11px;
		height: 11px;
	}
	.fo {
		width: 18px;
		display: flex;
		color: #f0ad4e;
		flex: none;
	}
	.fo .fa {
		width: 15px;
		height: 15px;
	}
	.hm {
		width: 19px;
		display: flex;
		color: #333;
		flex: none;
	}
	.hm .fa {
		width: 16px;
		height: 16px;
	}
	.scroll {
		width: 15px;
		height: 843px;
		flex: none;
		background: #f1f1f1;
		display: flex;
		flex-direction: column;
		align-items: center;
		margin-top: 1px;
	}
	.sa {
		width: 8px;
		height: 6px;
		margin: 5px 0;
		fill: none;
		stroke: #505050;
		stroke-width: 2;
		flex: none;
	}
	.thumb {
		flex: 1;
		width: 15px;
		margin: 27px 0 55px;
		background: #cdcdcd;
	}
	.main {
		flex: 1;
		min-width: 0;
		margin-left: 5px;
		margin-right: 5px;
		padding-top: 5px;
		display: flex;
		flex-direction: column;
	}
	.crumbs {
		height: 36px;
		flex: none;
		box-sizing: border-box;
		border: 1px solid #ccc;
		display: flex;
		align-items: stretch;
		padding-left: 13px;
		font-size: 14px;
		color: #5b8fc9;
		background: #fff;
	}
	.crumb {
		display: flex;
		align-items: center;
		gap: 3px;
		margin-right: 24.5px;
		white-space: nowrap;
	}
	.crumb .fa {
		width: 15px;
		height: 15px;
	}
	.crumb.thin .fa {
		width: 11px;
	}
	.crumb.off {
		color: #9c9c9c;
	}
	.crumb-sep {
		width: 0;
		border-left: 1px dotted #bbb;
		margin: 0 13px 0 -12px;
	}
	.listing {
		margin-top: 5px;
		flex: 1;
		min-height: 0;
		border: 1px solid #ccc;
		box-sizing: border-box;
		margin-bottom: 1px;
	}
	table {
		width: 100%;
		table-layout: fixed;
		border-collapse: collapse;
		font: 14px 'Liberation Sans', Arial, sans-serif;
		color: #333;
	}
	th {
		height: 34px;
		background: #f0f0f0;
		border-bottom: 1px solid #ccc;
		text-align: left;
		font-weight: 400;
		color: #5b8fc9;
		padding: 2px 0 0;
		box-sizing: border-box;
	}
	td {
		height: 31px;
		padding: 1px 0 0;
		border-bottom: 1px solid #ddd;
		white-space: nowrap;
		box-sizing: border-box;
	}
	tbody tr:nth-child(even) {
		background: #f9f9f9;
	}
	tbody tr:last-child td {
		border-bottom: none;
	}
	tr.sel,
	tbody tr.sel:nth-child(even) {
		background: #d6eaf8;
	}
	tr.sel .ico {
		box-shadow: inset 2px 0 0 #2a9ad6;
	}
	.ico {
		padding-left: 5px;
		line-height: 0;
	}
	.i-dir {
		width: 20px;
		height: 16px;
		fill: #f0ad4e;
	}
	.i-txt {
		width: 15px;
		height: 20px;
		fill: #7a5b9a;
	}
	.i-code {
		width: 15px;
		height: 20px;
		fill: none;
		stroke: #4a5f8a;
		stroke-width: 1.3;
	}

	/* overlays */
	.arrow {
		position: absolute;
		left: 510px;
		top: 365px;
		width: 150px;
		height: 50px;
		overflow: visible;
	}
	.arrow path {
		fill: #e74c3c;
	}
	.toast {
		position: absolute;
		right: 2px;
		bottom: 0;
		width: 300px;
		height: 48px;
		box-sizing: border-box;
		background: #333338;
		border: 1px solid #1f1f22;
		border-bottom: none;
		display: flex;
		align-items: center;
		padding-left: 11px;
		color: #b9bbbf;
		font-size: 13px;
	}
	.toast-ic {
		width: 24px;
		height: 24px;
	}
	.toast-text {
		margin-left: 11px;
		padding-top: 2px;
	}
	.toast-text b {
		color: #eee;
	}
	.toast-x {
		position: absolute;
		right: 16px;
		top: 15px;
		width: 9px;
		height: 9px;
		fill: none;
		stroke: #ddd;
		stroke-width: 1.3;
	}
</style>
